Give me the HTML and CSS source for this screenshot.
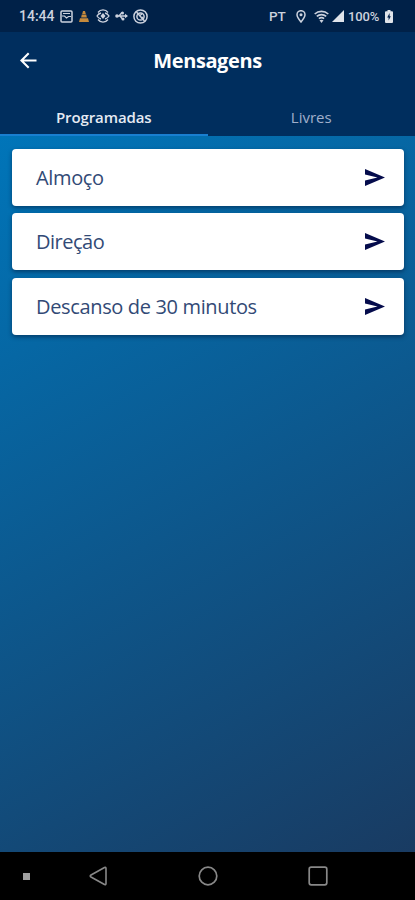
FILE: index.html
```html
<!DOCTYPE html>
<html lang="pt">
<head>
    <meta charset="UTF-8">
    <meta name="viewport" content="width=device-width, initial-scale=1.0">
    <title>Mensagens</title>
    <link rel="stylesheet" href="styles.css">
</head>
<body>
    <div class="status-bar">
        <span class="clock">14:44</span>
        <svg class="icon-image" width="13" height="13" viewBox="0 0 13 13" fill="none" stroke="#ccd2de" stroke-width="1.5">
            <rect x="1" y="1" width="11" height="11" rx="1"/>
            <path d="M2 6h2.500l2 2 2-1.500H11M3 3.500h7" stroke-width="1.2"/>
        </svg>
        <svg class="icon-cone" width="10" height="11" viewBox="0 0 10 11" fill="#c58a3c">
            <path d="M4 0h2l.8 3H3.200zM2.800 3.600h4.400l.7 3H2.100zM1 7.200h8l1 3.800H0z"/>
        </svg>
        <svg class="icon-sync" width="14" height="14" viewBox="0 0 14 14" fill="none" stroke="#ccd2de" stroke-width="1.3">
            <path d="M2 3.500A6.200 6.200 0 0 1 12 3.500M12 10.500A6.200 6.200 0 0 1 2 10.500"/>
            <path d="M5 4Q2.500 4.500 1 7q1.500 2.500 4 3M9 4Q11.500 4.500 13 7q-1.500 2.500-4 3"/>
            <path d="M7 4L9.500 7 7 10 4.500 7z" fill="#ccd2de" stroke="none"/>
        </svg>
        <svg class="icon-usb" width="13" height="10" viewBox="0 0 13 10" fill="none" stroke="#ccd2de" stroke-width="1.3">
            <path d="M2 5h10M4 5l2.500-3H8M5 5l2.500 3H9"/>
            <path d="M13 5l-3-2.200v4.400z" fill="#ccd2de" stroke="none"/>
            <circle cx="2" cy="5" r="1.8" fill="#ccd2de" stroke="none"/>
            <circle cx="7.500" cy="2" r="1.500" fill="#ccd2de" stroke="none"/>
            <circle cx="8" cy="8" r="1.500" fill="#ccd2de" stroke="none"/>
        </svg>
        <svg class="icon-target" width="15" height="15" viewBox="0 0 15 15" fill="none" stroke="#ccd2de" stroke-width="1.5">
            <circle cx="7.5" cy="7.5" r="6.6"/>
            <circle cx="7.5" cy="7.5" r="3.6"/>
            <path d="M3.500 3l8 9M6 7l3-2M8 9.500l2-1.500"/>
        </svg>
        <span class="lang">PT</span>
        <svg class="icon-pin" width="10" height="13" viewBox="0 0 10 13" fill="none" stroke="#ccd2de" stroke-width="1.5">
            <path d="M5 12C2.600 9 1 7 1 4.700a4 4 0 0 1 8 0C9 7 7.400 9 5 12z"/>
            <circle cx="5" cy="4.700" r="1.500" fill="#ccd2de" stroke="none"/>
        </svg>
        <svg class="icon-wifi" width="15" height="13" viewBox="0 0 15 13" fill="none" stroke="#ccd2de" stroke-width="1.6">
            <path d="M.7 4a10 10 0 0 1 13.600 0M2.800 6.400a7 7 0 0 1 9.400 0M4.900 8.700a4 4 0 0 1 5.200 0"/>
            <path d="M7.500 13L5.500 10.300q2-1.300 4 0z" fill="#ccd2de" stroke="none"/>
        </svg>
        <svg class="icon-signal" width="12" height="12" viewBox="0 0 12 12" fill="#e0e4ea">
            <path d="M12 0v12H0z"/>
        </svg>
        <span class="percent">100%</span>
        <svg class="icon-battery" width="8" height="13" viewBox="0 0 8 13">
            <path d="M2.500 0h3v1.300H7q1 0 1 1V12q0 1-1 1H1q-1 0-1-1V2.300q0-1 1-1h1.500z" fill="#e0e4ea"/>
            <path d="M4.600 3L2.200 7.400h1.400V10.500L5.800 6.300H4.600z" fill="#00204a"/>
        </svg>
    </div>

    <header class="header">
        <svg class="back" width="17" height="17" viewBox="0 0 18 18" fill="none" stroke="#fff" stroke-width="2.2">
            <path d="M17.500 9H2M9.200 1.300L1.500 9l7.700 7.700"/>
        </svg>
        <h1 class="title">Mensagens</h1>
    </header>
    <nav class="tabs">
        <div class="tab active"><span>Programadas</span></div>
        <div class="tab"><span>Livres</span></div>
    </nav>

    <main class="messages">
        <div class="card">
            <span class="label">Almoço</span>
            <svg class="send" width="20" height="17" viewBox="0 0 20 17" fill="#050c4c"><path d="M0 0l20 8.500L0 17v-5.500l12.500-3L0 5.500z"/></svg>
        </div>
        <div class="card">
            <span class="label narrow">Direção</span>
            <svg class="send" width="20" height="17" viewBox="0 0 20 17" fill="#050c4c"><path d="M0 0l20 8.500L0 17v-5.500l12.500-3L0 5.500z"/></svg>
        </div>
        <div class="card">
            <span class="label">Descanso de 30 minutos</span>
            <svg class="send" width="20" height="17" viewBox="0 0 20 17" fill="#050c4c"><path d="M0 0l20 8.500L0 17v-5.500l12.500-3L0 5.500z"/></svg>
        </div>
    </main>

    <footer class="nav-bar">
        <span class="dot"></span>
        <svg class="nav-back" width="18" height="20" viewBox="0 0 18 20" fill="none" stroke="#888" stroke-width="1.600" stroke-linejoin="round">
            <path d="M15.500 1.500Q17 1 17 2.500v15q0 1.500-1.500 1L2 11q-1.500-1 0-2z"/>
        </svg>
        <svg class="nav-home" width="20" height="20" viewBox="0 0 20 20" fill="none" stroke="#888" stroke-width="1.700">
            <circle cx="10" cy="10" r="8.800"/>
        </svg>
        <svg class="nav-recent" width="20" height="20" viewBox="0 0 20 20" fill="none" stroke="#888" stroke-width="1.700">
            <rect x="1.200" y="1.200" width="17.600" height="17.600" rx="2"/>
        </svg>
    </footer>
</body>
</html>
```
FILE: styles.css
```css
body {
    font-family: "Open Sans", "Noto Sans", sans-serif;
    display: flex;
    flex-direction: column;
    height: 900px;
    margin: 0;
    overflow: hidden;
    background: #000;
}
svg {
    display: block;
    flex-shrink: 0;
}
.status-bar {
    display: flex;
    align-items: center;
    box-sizing: border-box;
    height: 32px;
    padding-left: 19px;
    background: #002148;
    color: #ccd2de;
    font-family: Roboto, sans-serif;
    font-size: 13px;
    font-weight: 500;
    line-height: 33px;
    white-space: nowrap;
}
.clock {
    width: 41px;
    font-size: 14px;
}
.icon-cone {
    margin-left: 6px;
}
.icon-sync {
    margin-left: 7px;
}
.icon-usb {
    margin-left: 5px;
}
.icon-target {
    margin-left: 5px;
}
.lang {
    width: 27px;
    margin-left: 121px;
    font-size: 13.5px;
}
.icon-wifi {
    margin-left: 8px;
}
.icon-signal {
    margin-left: 3px;
}
.percent {
    width: 33px;
    margin-left: 4px;
    font-size: 13px;
    letter-spacing: -0.1px;
}
.icon-battery {
    margin-left: 4px;
}
.header {
    display: grid;
    grid-template-columns: 40px 1fr 40px;
    align-items: center;
    height: 57px;
    background: #002e5e;
}
.back {
    margin-left: 20px;
}
.title {
    margin: 0;
    color: #fff;
    font-size: 20px;
    font-weight: 700;
    letter-spacing: -0.4px;
    line-height: 28px;
    text-align: center;
}
.tabs {
    display: flex;
    height: 47px;
    background: #002e5e;
}
.tab {
    display: flex;
    justify-content: center;
    box-sizing: border-box;
    flex: 1;
    padding-top: 17px;
    color: #a0afcb;
    font-size: 15px;
    line-height: 22px;
}
.tab.active {
    color: #e5eaf3;
    font-weight: 600;
    letter-spacing: -0.1px;
    border-bottom: 2px solid #197fd0;
}
.messages {
    display: flex;
    flex-direction: column;
    gap: 7.5px;
    box-sizing: border-box;
    height: 716px;
    padding: 12.5px 11.5px 0 12px;
    background: linear-gradient(151deg, #0075b9, #193b62);
}
.card {
    display: flex;
    align-items: center;
    justify-content: space-between;
    box-sizing: border-box;
    height: 57px;
    padding: 0 19px 0 24px;
    border-radius: 4px;
    background: #fff;
    box-shadow: 0 2px 4px rgba(0, 20, 50, 0.5);
    color: #324a76;
    font-size: 20px;
    line-height: 28px;
}
.label {
    padding-top: 1px;
    letter-spacing: -0.35px;
}
.label.narrow {
    letter-spacing: -0.5px;
}
.nav-bar {
    display: flex;
    align-items: center;
    height: 48px;
    background: #000;
}
.dot {
    width: 7px;
    height: 7px;
    margin-left: 23px;
    background: #a0a0a0;
}
.nav-back {
    margin-left: 58.5px;
}
.nav-home {
    margin-left: 91px;
}
.nav-recent {
    margin-left: 90.5px;
}
```
